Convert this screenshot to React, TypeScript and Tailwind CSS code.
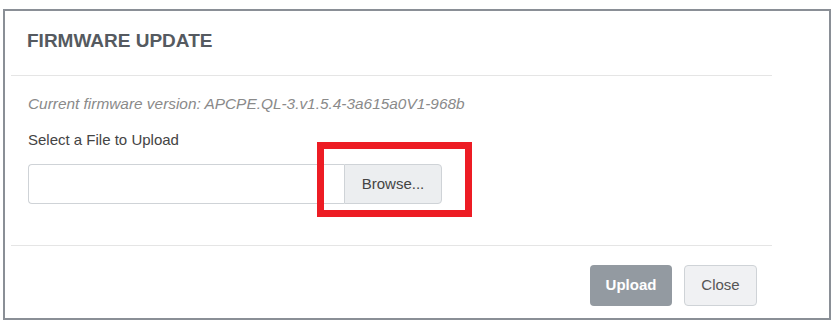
export default function App() {
  return (
    <div className="w-[838px] h-[324px] bg-white pl-[3px] pt-[9px] font-['Liberation_Sans',Arial,sans-serif]">
      <div className="w-[828px] h-[311px] border-2 border-[#8a8f96] bg-white pl-[6px]">
        <div className="w-[761px]">
          {/* Header */}
          <div className="pt-[20px] pb-[24px] pl-[16px] border-b border-[#e5e5e5]">
            <h2 className="text-[19px] leading-[20px] font-bold text-[#555a60]">FIRMWARE UPDATE</h2>
          </div>

          {/* Body */}
          <div className="pt-[18px] pb-[41px] pl-[17px] border-b border-[#e5e5e5]">
            <p className="text-[15.4px] leading-[20px] italic text-[#8a8a8a]">
              Current firmware version: APCPE.QL-3.v1.5.4-3a615a0V1-968b
            </p>
            <p className="mt-[16px] text-[15px] leading-[20px] text-[#444]">Select a File to Upload</p>
            <div className="relative mt-[14px] flex w-[414px] h-[40px]">
              <div className="flex-1 border border-[#cfd3d7] border-r-0 rounded-l-[4px] bg-white" />
              <button className="w-[98px] border border-[#cfd3d7] rounded-r-[4px] bg-[#eceef0] text-[15px] text-[#444]">
                Browse...
              </button>
              <div className="absolute left-[289px] top-[-22px] w-[155px] h-[75px] border-[7px] border-[#ed1c24]" />
            </div>
          </div>

          {/* Footer */}
          <div className="flex justify-end gap-[12px] pt-[19px] pr-[15px]">
            <button className="w-[82px] h-[41px] rounded-[4px] bg-[#939aa1] text-white text-[15px] font-bold">
              Upload
            </button>
            <button className="w-[73px] h-[41px] rounded-[4px] border border-[#cfd3d7] bg-[#f0f1f3] text-[#555] text-[15px]">
              Close
            </button>
          </div>
        </div>
      </div>
    </div>
  );
}
